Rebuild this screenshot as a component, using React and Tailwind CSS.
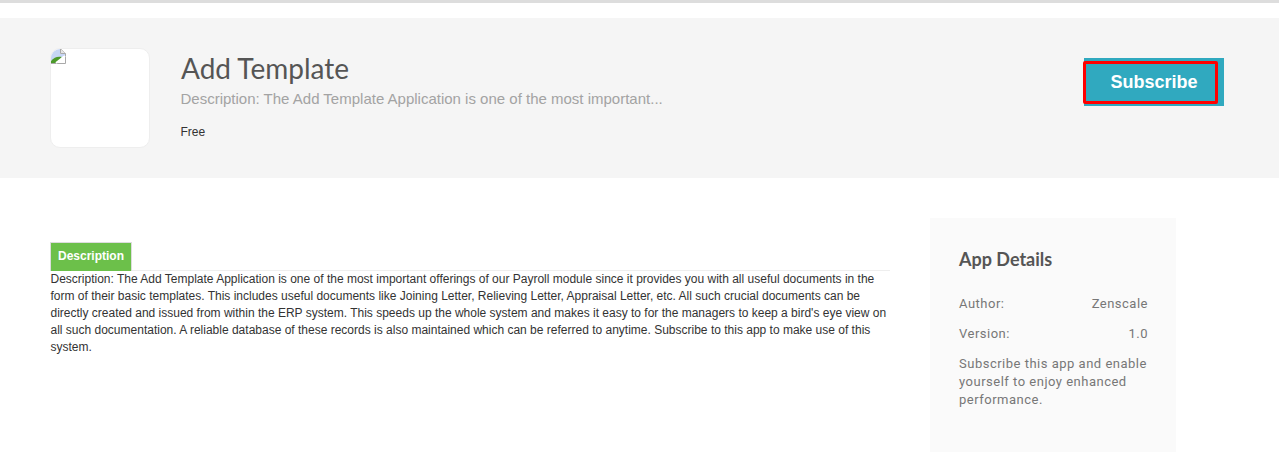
export default function App() {
  return (
    <div className="w-[1279px] h-[452px] overflow-hidden bg-white font-['Liberation_Sans',sans-serif]">
      <div className="h-[3px] bg-[#dddddd]" />
      <div className="mt-[15px] h-[160px] bg-[#f5f5f5] flex items-start pl-[50px] pt-[30px]">
        <div className="w-[100px] h-[100px] shrink-0 bg-white rounded-[10px] border border-[#eeeeee] relative overflow-hidden">
          <svg className="absolute -left-px -top-px" width="16" height="16" viewBox="0 0 16 16">
            <path d="M0.5 0.5H10.5L15.5 5.5V15.5H0.5Z" fill="#ffffff" stroke="#a9a9a9" />
            <path d="M10.5 0.5V5.5H15.5" fill="#e4e4e4" stroke="#a9a9a9" />
            <path d="M1 1H10V6H15V8L9 10L1 13Z" fill="#c6d6f5" />
            <path d="M1 15V13C4 9 8 8 12 9L7 15Z" fill="#4c9a2a" />
            <path d="M6 15L15 8" stroke="#ffffff" strokeWidth="2" />
          </svg>
        </div>
        <div className="ml-[30px] w-[700px]">
          <h1 className="font-['Lato',sans-serif] text-[28px] leading-[34px] mt-[3px] ml-px text-[#555555]">Add Template</h1>
          <p className="text-[15px] leading-[20px] mt-[4px] ml-[0.5px] text-[#a3a3a3]">Description: The Add Template Application is one of the most important...</p>
          <p className="text-[12px] leading-[16px] mt-[15px] ml-[0.5px] text-[#333333]">Free</p>
        </div>
        <div className="ml-auto mr-[55px] mt-[10px] w-[140px] h-[48px] bg-[#30a9bf] pt-[3px]">
          <button className="w-[135px] h-[43px] -ml-px border-[3px] border-[#ff0000] rounded-[2px] bg-[#30a9bf] text-white font-bold text-[18px] block pl-[7px]">Subscribe</button>
        </div>
      </div>
      <div className="flex items-start pl-[50px] pt-[40px]">
        <div className="w-[840px] pt-[24px] shrink-0">
          <div className="border-b border-[#eeeeee] h-[29px]">
            <div className="w-[82px] h-[29px] bg-[#6cc04a] border border-[#dddddd] border-b-0 text-white font-bold text-[12px] leading-[26px] text-center">Description</div>
          </div>
          <p className="text-[12px] leading-[17px] text-[#333333] pl-[0.5px]">Description: The Add Template Application is one of the most important offerings of our Payroll module since it provides you with all useful documents in the form of their basic templates. This includes useful documents like Joining Letter, Relieving Letter, Appraisal Letter, etc. All such crucial documents can be directly created and issued from within the ERP system. This speeds up the whole system and makes it easy to for the managers to keep a bird's eye view on all such documentation. A reliable database of these records is also maintained which can be referred to anytime. Subscribe to this app to make use of this system.</p>
        </div>
        <aside className="ml-[40px] w-[246px] h-[240px] shrink-0 bg-[#fafafa] pl-[29px] pr-[28px] pt-[29px] font-['Roboto',sans-serif] text-[13px] tracking-[0.5px] text-[#777777]">
          <h2 className="font-['Lato',sans-serif] font-bold text-[18px] leading-[24px] tracking-normal text-[#555555]">App Details</h2>
          <div className="flex justify-between mt-[24px] leading-[18px]"><span>Author:</span><span>Zenscale</span></div>
          <div className="flex justify-between mt-[12px] leading-[18px]"><span>Version:</span><span>1.0</span></div>
          <p className="mt-[12px] leading-[18px]">Subscribe this app and enable yourself to enjoy enhanced performance.</p>
        </aside>
      </div>
    </div>
  );
}
